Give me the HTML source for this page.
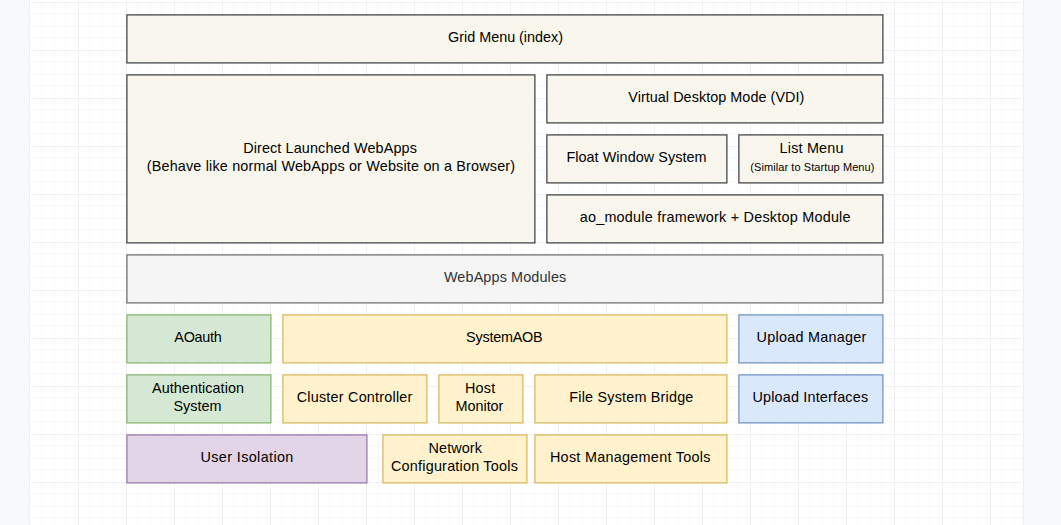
<!DOCTYPE html>
<html><head><meta charset="utf-8"><style>
html,body{margin:0;padding:0;}
body{width:1061px;height:525px;overflow:hidden;background:#f8f9fa;position:relative;font-family:"Liberation Sans",sans-serif;}
#page{position:absolute;left:30px;top:-10px;width:993px;height:545px;background:#fff;box-shadow:0 0 2px rgba(0,0,0,0.12);}
svg{position:absolute;left:0;top:0;}
.t{position:absolute;text-align:center;line-height:18px;height:18px;white-space:nowrap;}
</style></head><body>
<div id="page"></div>
<svg width="1061" height="525" viewBox="0 0 1061 525" shape-rendering="crispEdges"><rect x="41" y="0" width="2" height="525" fill="#fcfcfc"/><rect x="53" y="0" width="2" height="525" fill="#fcfcfc"/><rect x="65" y="0" width="2" height="525" fill="#fcfcfc"/><rect x="89" y="0" width="2" height="525" fill="#fcfcfc"/><rect x="101" y="0" width="2" height="525" fill="#fcfcfc"/><rect x="113" y="0" width="2" height="525" fill="#fcfcfc"/><rect x="137" y="0" width="2" height="525" fill="#fcfcfc"/><rect x="149" y="0" width="2" height="525" fill="#fcfcfc"/><rect x="161" y="0" width="2" height="525" fill="#fcfcfc"/><rect x="185" y="0" width="2" height="525" fill="#fcfcfc"/><rect x="197" y="0" width="2" height="525" fill="#fcfcfc"/><rect x="209" y="0" width="2" height="525" fill="#fcfcfc"/><rect x="233" y="0" width="2" height="525" fill="#fcfcfc"/><rect x="245" y="0" width="2" height="525" fill="#fcfcfc"/><rect x="257" y="0" width="2" height="525" fill="#fcfcfc"/><rect x="281" y="0" width="2" height="525" fill="#fcfcfc"/><rect x="293" y="0" width="2" height="525" fill="#fcfcfc"/><rect x="305" y="0" width="2" height="525" fill="#fcfcfc"/><rect x="329" y="0" width="2" height="525" fill="#fcfcfc"/><rect x="341" y="0" width="2" height="525" fill="#fcfcfc"/><rect x="353" y="0" width="2" height="525" fill="#fcfcfc"/><rect x="377" y="0" width="2" height="525" fill="#fcfcfc"/><rect x="389" y="0" width="2" height="525" fill="#fcfcfc"/><rect x="401" y="0" width="2" height="525" fill="#fcfcfc"/><rect x="425" y="0" width="2" height="525" fill="#fcfcfc"/><rect x="437" y="0" width="2" height="525" fill="#fcfcfc"/><rect x="449" y="0" width="2" height="525" fill="#fcfcfc"/><rect x="473" y="0" width="2" height="525" fill="#fcfcfc"/><rect x="485" y="0" width="2" height="525" fill="#fcfcfc"/><rect x="497" y="0" width="2" height="525" fill="#fcfcfc"/><rect x="521" y="0" width="2" height="525" fill="#fcfcfc"/><rect x="533" y="0" width="2" height="525" fill="#fcfcfc"/><rect x="545" y="0" width="2" height="525" fill="#fcfcfc"/><rect x="569" y="0" width="2" height="525" fill="#fcfcfc"/><rect x="581" y="0" width="2" height="525" fill="#fcfcfc"/><rect x="593" y="0" width="2" height="525" fill="#fcfcfc"/><rect x="617" y="0" width="2" height="525" fill="#fcfcfc"/><rect x="629" y="0" width="2" height="525" fill="#fcfcfc"/><rect x="641" y="0" width="2" height="525" fill="#fcfcfc"/><rect x="665" y="0" width="2" height="525" fill="#fcfcfc"/><rect x="677" y="0" width="2" height="525" fill="#fcfcfc"/><rect x="689" y="0" width="2" height="525" fill="#fcfcfc"/><rect x="713" y="0" width="2" height="525" fill="#fcfcfc"/><rect x="725" y="0" width="2" height="525" fill="#fcfcfc"/><rect x="737" y="0" width="2" height="525" fill="#fcfcfc"/><rect x="761" y="0" width="2" height="525" fill="#fcfcfc"/><rect x="773" y="0" width="2" height="525" fill="#fcfcfc"/><rect x="785" y="0" width="2" height="525" fill="#fcfcfc"/><rect x="809" y="0" width="2" height="525" fill="#fcfcfc"/><rect x="821" y="0" width="2" height="525" fill="#fcfcfc"/><rect x="833" y="0" width="2" height="525" fill="#fcfcfc"/><rect x="857" y="0" width="2" height="525" fill="#fcfcfc"/><rect x="869" y="0" width="2" height="525" fill="#fcfcfc"/><rect x="881" y="0" width="2" height="525" fill="#fcfcfc"/><rect x="905" y="0" width="2" height="525" fill="#fcfcfc"/><rect x="917" y="0" width="2" height="525" fill="#fcfcfc"/><rect x="929" y="0" width="2" height="525" fill="#fcfcfc"/><rect x="953" y="0" width="2" height="525" fill="#fcfcfc"/><rect x="965" y="0" width="2" height="525" fill="#fcfcfc"/><rect x="977" y="0" width="2" height="525" fill="#fcfcfc"/><rect x="1001" y="0" width="2" height="525" fill="#fcfcfc"/><rect x="1013" y="0" width="2" height="525" fill="#fcfcfc"/><rect x="31" y="13" width="991" height="2" fill="#fbfbfb"/><rect x="31" y="25" width="991" height="2" fill="#fbfbfb"/><rect x="31" y="37" width="991" height="2" fill="#fbfbfb"/><rect x="31" y="61" width="991" height="2" fill="#fbfbfb"/><rect x="31" y="73" width="991" height="2" fill="#fbfbfb"/><rect x="31" y="85" width="991" height="2" fill="#fbfbfb"/><rect x="31" y="109" width="991" height="2" fill="#fbfbfb"/><rect x="31" y="121" width="991" height="2" fill="#fbfbfb"/><rect x="31" y="133" width="991" height="2" fill="#fbfbfb"/><rect x="31" y="157" width="991" height="2" fill="#fbfbfb"/><rect x="31" y="169" width="991" height="2" fill="#fbfbfb"/><rect x="31" y="181" width="991" height="2" fill="#fbfbfb"/><rect x="31" y="205" width="991" height="2" fill="#fbfbfb"/><rect x="31" y="217" width="991" height="2" fill="#fbfbfb"/><rect x="31" y="229" width="991" height="2" fill="#fbfbfb"/><rect x="31" y="253" width="991" height="2" fill="#fbfbfb"/><rect x="31" y="265" width="991" height="2" fill="#fbfbfb"/><rect x="31" y="277" width="991" height="2" fill="#fbfbfb"/><rect x="31" y="301" width="991" height="2" fill="#fbfbfb"/><rect x="31" y="313" width="991" height="2" fill="#fbfbfb"/><rect x="31" y="325" width="991" height="2" fill="#fbfbfb"/><rect x="31" y="349" width="991" height="2" fill="#fbfbfb"/><rect x="31" y="361" width="991" height="2" fill="#fbfbfb"/><rect x="31" y="373" width="991" height="2" fill="#fbfbfb"/><rect x="31" y="397" width="991" height="2" fill="#fbfbfb"/><rect x="31" y="409" width="991" height="2" fill="#fbfbfb"/><rect x="31" y="421" width="991" height="2" fill="#fbfbfb"/><rect x="31" y="445" width="991" height="2" fill="#fbfbfb"/><rect x="31" y="457" width="991" height="2" fill="#fbfbfb"/><rect x="31" y="469" width="991" height="2" fill="#fbfbfb"/><rect x="31" y="493" width="991" height="2" fill="#fbfbfb"/><rect x="31" y="505" width="991" height="2" fill="#fbfbfb"/><rect x="31" y="517" width="991" height="2" fill="#fbfbfb"/><rect x="78" y="0" width="1" height="525" fill="#f0f0f0"/><rect x="126" y="0" width="1" height="525" fill="#f0f0f0"/><rect x="174" y="0" width="1" height="525" fill="#f0f0f0"/><rect x="222" y="0" width="1" height="525" fill="#f0f0f0"/><rect x="270" y="0" width="1" height="525" fill="#f0f0f0"/><rect x="318" y="0" width="1" height="525" fill="#f0f0f0"/><rect x="366" y="0" width="1" height="525" fill="#f0f0f0"/><rect x="414" y="0" width="1" height="525" fill="#f0f0f0"/><rect x="462" y="0" width="1" height="525" fill="#f0f0f0"/><rect x="510" y="0" width="1" height="525" fill="#f0f0f0"/><rect x="558" y="0" width="1" height="525" fill="#f0f0f0"/><rect x="606" y="0" width="1" height="525" fill="#f0f0f0"/><rect x="654" y="0" width="1" height="525" fill="#f0f0f0"/><rect x="702" y="0" width="1" height="525" fill="#f0f0f0"/><rect x="750" y="0" width="1" height="525" fill="#f0f0f0"/><rect x="798" y="0" width="1" height="525" fill="#f0f0f0"/><rect x="846" y="0" width="1" height="525" fill="#f0f0f0"/><rect x="894" y="0" width="1" height="525" fill="#f0f0f0"/><rect x="942" y="0" width="1" height="525" fill="#f0f0f0"/><rect x="990" y="0" width="1" height="525" fill="#f0f0f0"/><rect x="31" y="2" width="991" height="1" fill="#f0f0f0"/><rect x="31" y="50" width="991" height="1" fill="#f0f0f0"/><rect x="31" y="98" width="991" height="1" fill="#f0f0f0"/><rect x="31" y="146" width="991" height="1" fill="#f0f0f0"/><rect x="31" y="194" width="991" height="1" fill="#f0f0f0"/><rect x="31" y="242" width="991" height="1" fill="#f0f0f0"/><rect x="31" y="290" width="991" height="1" fill="#f0f0f0"/><rect x="31" y="338" width="991" height="1" fill="#f0f0f0"/><rect x="31" y="386" width="991" height="1" fill="#f0f0f0"/><rect x="31" y="434" width="991" height="1" fill="#f0f0f0"/><rect x="31" y="482" width="991" height="1" fill="#f0f0f0"/></svg>
<svg width="1061" height="525" viewBox="0 0 1061 525"><rect x="126.9" y="14.9" width="756.0" height="48.0" fill="#f9f7ed" stroke="#36393d" stroke-width="1.2"/><rect x="126.9" y="74.9" width="408.0" height="168.0" fill="#f9f7ed" stroke="#36393d" stroke-width="1.2"/><rect x="546.9" y="74.9" width="336.0" height="48.0" fill="#f9f7ed" stroke="#36393d" stroke-width="1.2"/><rect x="546.9" y="134.9" width="180.0" height="48.0" fill="#f9f7ed" stroke="#36393d" stroke-width="1.2"/><rect x="738.9" y="134.9" width="144.0" height="48.0" fill="#f9f7ed" stroke="#36393d" stroke-width="1.2"/><rect x="546.9" y="194.9" width="336.0" height="48.0" fill="#f9f7ed" stroke="#36393d" stroke-width="1.2"/><rect x="126.9" y="254.9" width="756.0" height="48.0" fill="#f5f5f5" stroke="#666666" stroke-width="1.2"/><rect x="126.9" y="314.9" width="144.0" height="48.0" fill="#d5e8d4" stroke="#82b366" stroke-width="1.2"/><rect x="282.9" y="314.9" width="444.0" height="48.0" fill="#fff2cc" stroke="#d6b656" stroke-width="1.2"/><rect x="738.9" y="314.9" width="144.0" height="48.0" fill="#dae8fc" stroke="#6c8ebf" stroke-width="1.2"/><rect x="126.9" y="374.9" width="144.0" height="48.0" fill="#d5e8d4" stroke="#82b366" stroke-width="1.2"/><rect x="282.9" y="374.9" width="144.0" height="48.0" fill="#fff2cc" stroke="#d6b656" stroke-width="1.2"/><rect x="438.9" y="374.9" width="84.0" height="48.0" fill="#fff2cc" stroke="#d6b656" stroke-width="1.2"/><rect x="534.9" y="374.9" width="192.0" height="48.0" fill="#fff2cc" stroke="#d6b656" stroke-width="1.2"/><rect x="738.9" y="374.9" width="144.0" height="48.0" fill="#dae8fc" stroke="#6c8ebf" stroke-width="1.2"/><rect x="126.9" y="434.9" width="240.0" height="48.0" fill="#e1d5e7" stroke="#9673a6" stroke-width="1.2"/><rect x="382.9" y="434.9" width="144.0" height="48.0" fill="#fff2cc" stroke="#d6b656" stroke-width="1.2"/><rect x="534.9" y="434.9" width="192.0" height="48.0" fill="#fff2cc" stroke="#d6b656" stroke-width="1.2"/></svg>
<div class="t" style="left:127.55px;top:28px;width:756.0px;font-size:14.4px;letter-spacing:-0.019px;text-indent:-0.019px;color:#000">Grid Menu (index)</div><div class="t" style="left:126.00px;top:139px;width:408.0px;font-size:14.4px;letter-spacing:0.127px;text-indent:0.127px;color:#000">Direct Launched WebApps</div><div class="t" style="left:126.90px;top:157px;width:408.0px;font-size:14.4px;letter-spacing:0.176px;text-indent:0.176px;color:#000">(Behave like normal WebApps or Website on a Browser)</div><div class="t" style="left:548.30px;top:88px;width:336.0px;font-size:14.4px;letter-spacing:0.048px;text-indent:0.048px;color:#000">Virtual Desktop Mode (VDI)</div><div class="t" style="left:546.50px;top:148px;width:180.0px;font-size:14.4px;letter-spacing:0.056px;text-indent:0.056px;color:#000">Float Window System</div><div class="t" style="left:739.55px;top:139px;width:144.0px;font-size:14.4px;letter-spacing:0.188px;text-indent:0.188px;color:#000">List Menu</div><div class="t" style="left:740.35px;top:158px;width:144.0px;font-size:11px;letter-spacing:0.079px;text-indent:0.079px;color:#000">(Similar to Startup Menu)</div><div class="t" style="left:547.15px;top:208px;width:336.0px;font-size:14.4px;letter-spacing:0.231px;text-indent:0.231px;color:#000">ao_module framework + Desktop Module</div><div class="t" style="left:127.10px;top:268px;width:756.0px;font-size:14.4px;letter-spacing:0.129px;text-indent:0.129px;color:#333">WebApps Modules</div><div class="t" style="left:126.05px;top:328px;width:144.0px;font-size:14.4px;letter-spacing:-0.260px;text-indent:-0.260px;color:#000">AOauth</div><div class="t" style="left:282.40px;top:328px;width:444.0px;font-size:14.4px;letter-spacing:-0.225px;text-indent:-0.225px;color:#000">SystemAOB</div><div class="t" style="left:739.40px;top:328px;width:144.0px;font-size:14.4px;letter-spacing:0.246px;text-indent:0.246px;color:#000">Upload Manager</div><div class="t" style="left:126.00px;top:379px;width:144.0px;font-size:14.4px;letter-spacing:0.062px;text-indent:0.062px;color:#000">Authentication</div><div class="t" style="left:125.50px;top:397px;width:144.0px;font-size:14.4px;letter-spacing:0.040px;text-indent:0.040px;color:#000">System</div><div class="t" style="left:282.55px;top:388px;width:144.0px;font-size:14.4px;letter-spacing:0.218px;text-indent:0.218px;color:#000">Cluster Controller</div><div class="t" style="left:438.05px;top:379px;width:84.0px;font-size:14.4px;letter-spacing:0.233px;text-indent:0.233px;color:#000">Host</div><div class="t" style="left:437.50px;top:397px;width:84.0px;font-size:14.4px;letter-spacing:-0.033px;text-indent:-0.033px;color:#000">Monitor</div><div class="t" style="left:535.35px;top:388px;width:192.0px;font-size:14.4px;letter-spacing:0.194px;text-indent:0.194px;color:#000">File System Bridge</div><div class="t" style="left:738.30px;top:388px;width:144.0px;font-size:14.4px;letter-spacing:0.175px;text-indent:0.175px;color:#000">Upload Interfaces</div><div class="t" style="left:126.95px;top:448px;width:240.0px;font-size:14.4px;letter-spacing:0.377px;text-indent:0.377px;color:#000">User Isolation</div><div class="t" style="left:383.25px;top:439px;width:144.0px;font-size:14.4px;letter-spacing:0.083px;text-indent:0.083px;color:#000">Network</div><div class="t" style="left:382.45px;top:457px;width:144.0px;font-size:14.4px;letter-spacing:0.217px;text-indent:0.217px;color:#000">Configuration Tools</div><div class="t" style="left:534.20px;top:448px;width:192.0px;font-size:14.4px;letter-spacing:0.280px;text-indent:0.280px;color:#000">Host Management Tools</div>
</body></html>
